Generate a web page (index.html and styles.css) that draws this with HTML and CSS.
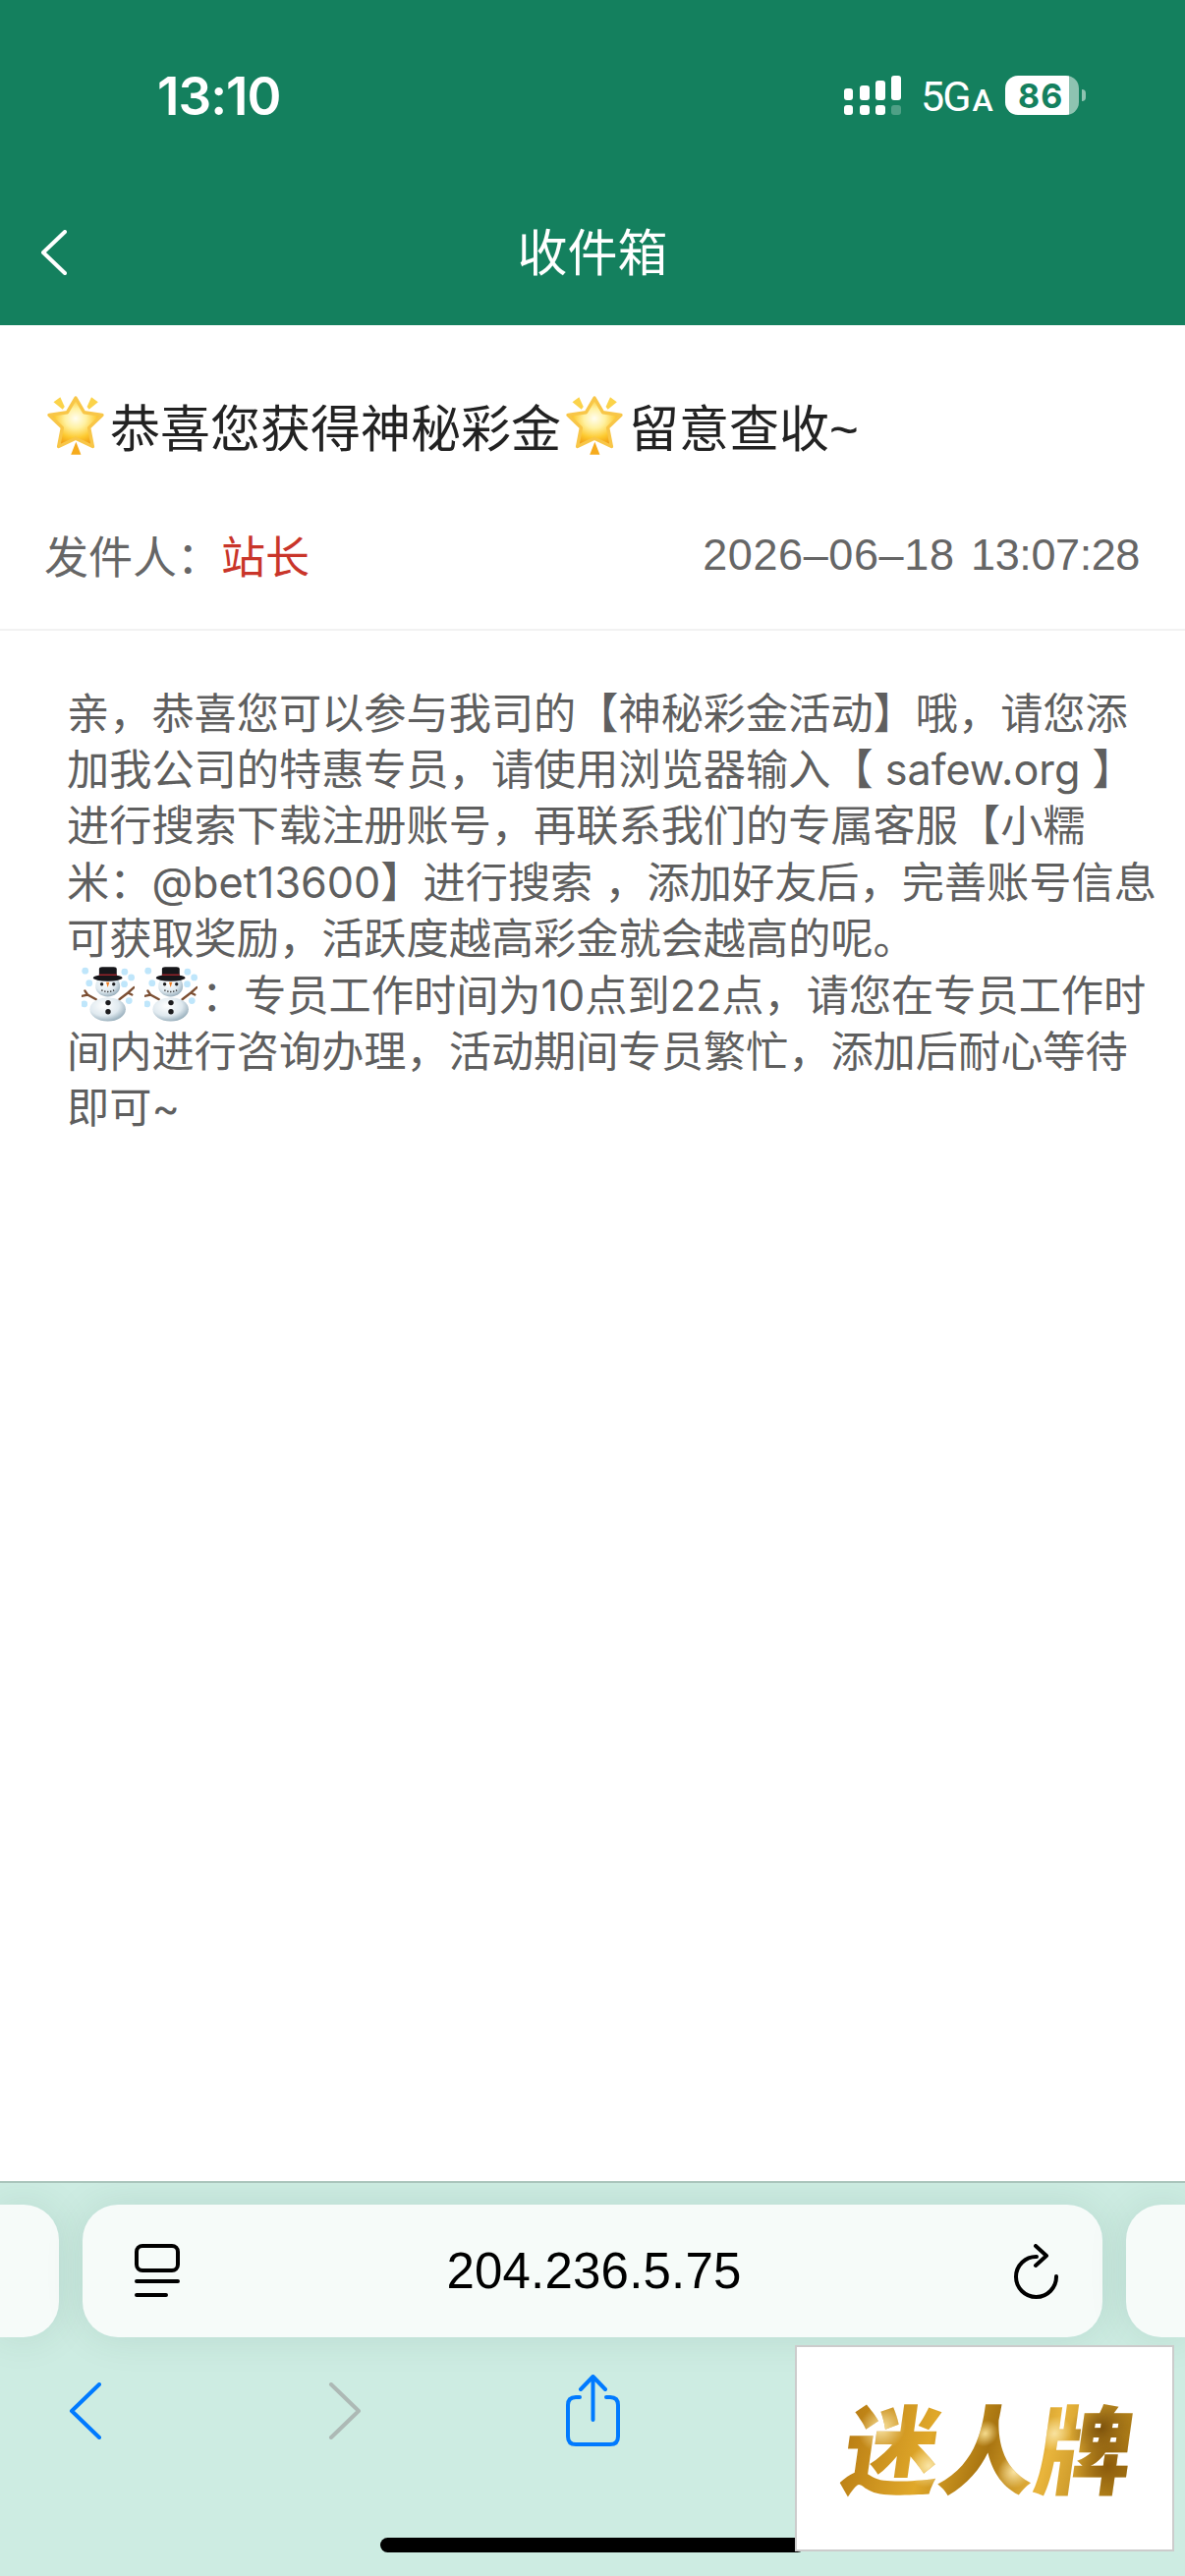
FILE: index.html
```html
<!DOCTYPE html>
<html lang="zh-CN">

<head>
  <meta charset="UTF-8">
  <meta name="viewport" content="width=device-width, initial-scale=1.0">
  <title>收件箱</title>
  <link rel="stylesheet" href="styles.css">
</head>

<body>
  <!-- shared emoji drawings -->
  <svg class="defs" width="0" height="0">
    <defs>
      <radialGradient id="starFill" cx="50%" cy="42%" r="58%">
        <stop offset="0" stop-color="#fffdf0" />
        <stop offset="0.35" stop-color="#fff1a0" />
        <stop offset="0.7" stop-color="#fdc92f" />
        <stop offset="1" stop-color="#f09a12" />
      </radialGradient>
      <radialGradient id="snowFill" cx="40%" cy="35%" r="70%">
        <stop offset="0" stop-color="#ffffff" />
        <stop offset="0.6" stop-color="#dfe9ef" />
        <stop offset="1" stop-color="#90a8b6" />
      </radialGradient>
      <symbol id="star" viewBox="55 78 170 176">
        <path d="M140 84 165 127 219 135 180 173 191 229 140 205 89 229 100 173 61 135 115 127Z" fill="url(#starFill)" stroke="#f8c648" stroke-width="10" stroke-linejoin="round" />
        <path d="M74 96 94 82 107 110 101 118Z" fill="#fbd34a" />
        <path d="M207 96 187 82 174 110 180 118Z" fill="#fbd34a" />
        <path d="M141 215 156 253 126 253Z" fill="#f6ab1d" />
      </symbol>
      <symbol id="snowman" viewBox="0 0 160 165">
        <path d="M44 98 18 84 0 88M18 84 10 72M114 98 140 78 158 62M140 78 152 84" fill="none" stroke="#7c4f33" stroke-width="7" stroke-linecap="round" />
        <g fill="#bfe6fb">
          <circle cx="11" cy="12" r="10" />
          <circle cx="23" cy="49" r="10" />
          <circle cx="8" cy="112" r="10" />
          <circle cx="130" cy="15" r="10" />
          <circle cx="150" cy="32" r="10" />
          <circle cx="129" cy="52" r="10" />
          <circle cx="143" cy="102" r="10" />
        </g>
        <ellipse cx="79" cy="128" rx="54" ry="36" fill="url(#snowFill)" />
        <ellipse cx="79" cy="58" rx="37" ry="32" fill="url(#snowFill)" />
        <ellipse cx="79" cy="33" rx="44" ry="10" fill="#16161a" />
        <path d="M53 32V7Q53 0 62 0H97Q106 0 106 7V32Z" fill="#16161a" />
        <rect x="53" y="22" width="53" height="4" fill="#a3242b" />
        <circle cx="61" cy="52" r="5" fill="#1c1c1e" />
        <circle cx="97" cy="52" r="5" fill="#1c1c1e" />
        <path d="M74 46H84L79 62Z" fill="#ef7d22" />
        <path d="M60 70Q79 80 98 70" fill="none" stroke="#333" stroke-width="4" stroke-dasharray="4 5" />
        <circle cx="80" cy="108" r="8" fill="#1c1c1e" />
        <circle cx="80" cy="135" r="8" fill="#1c1c1e" />
      </symbol>
    </defs>
  </svg>

  <div class="page">
    <header class="topbar">
      <div class="status">
        <span class="time">13:10</span>
        <div class="status-icons">
          <svg class="signal" width="58" height="40" viewBox="0 0 58 40" fill="#fff">
            <rect x="0" y="13" width="9" height="12" rx="3" />
            <rect x="16" y="10" width="10" height="15" rx="3" />
            <rect x="32" y="5" width="10" height="20" rx="3" />
            <rect x="48" y="0" width="10" height="25" rx="3" />
            <rect x="0" y="30" width="9" height="10" rx="3" />
            <rect x="16" y="30" width="10" height="10" rx="3" />
            <rect x="32" y="30" width="10" height="10" rx="3" />
            <rect x="48" y="30" width="10" height="10" rx="3" opacity="0.25" />
          </svg>
          <span class="network">5G<small>A</small></span>
          <div class="battery"><span>86</span></div>
          <i class="battery-nub"></i>
        </div>
      </div>
      <div class="navbar">
        <svg width="26" height="46" viewBox="0 0 26 46" fill="none" stroke="#fff" stroke-width="4" stroke-linecap="round" stroke-linejoin="round">
          <path d="M24 2 2 23 24 44" />
        </svg>
        <h2>收件箱</h2>
      </div>
    </header>

    <main class="message">
      <h1 class="subject"><svg class="star"><use href="#star" /></svg>恭喜您获得神秘彩金<svg class="star"><use href="#star" /></svg>留意查收~</h1>
      <div class="meta">
        <span>发件人&#xFF1A;<b class="sender">站长</b></span>
        <span class="date"><span class="date-day">2026–06–18</span> <span class="date-time">13:07:28</span></span>
      </div>
      <div class="body-text">
        亲&#xFF0C;恭喜您可以参与我司的【神秘彩金活动】哦&#xFF0C;请您添加我公司的特惠专员&#xFF0C;请使用浏览器输入【 safew.org 】进行搜索下载注册账号&#xFF0C;再联系我们的专属客服【小糯米&#xFF1A;@bet13600】进行搜索 &#xFF0C;添加好友后&#xFF0C;完善账号信息可获取奖励&#xFF0C;活跃度越高彩金就会越高的呢。<br>
        <span class="snow-run"><svg class="snowman"><use href="#snowman" /></svg><svg class="snowman"><use href="#snowman" /></svg></span>&#xFF1A;专员工作时间为10点到22点&#xFF0C;请您在专员工作时间内进行咨询办理&#xFF0C;活动期间专员繁忙&#xFF0C;添加后耐心等待即可~
      </div>
    </main>

    <footer class="toolbar">
      <div class="url-row">
        <div class="tab-edge tab-edge-left"></div>
        <div class="url-bar">
          <svg width="46" height="55" viewBox="0 0 46 55" fill="none" stroke="#000" stroke-width="4" stroke-linecap="round">
            <rect x="2" y="2" width="42" height="25" rx="6" />
            <path d="M2 38H44M2 52H32" />
          </svg>
          <span class="url">204.236.5.75</span>
          <svg width="46" height="56" viewBox="0 0 46 56" fill="none" stroke="#000" stroke-width="4" stroke-linecap="round" stroke-linejoin="round">
            <path d="M23 13A20.500 20.500 0 1 0 43 33" />
            <path d="M22 2 33 12 22 22" />
          </svg>
        </div>
        <div class="tab-edge tab-edge-right"></div>
      </div>
      <div class="nav-row">
        <svg width="34" height="58" viewBox="0 0 34 58" fill="none" stroke="#007aff" stroke-width="4" stroke-linecap="round" stroke-linejoin="round">
          <path d="M31 2 3 29 31 56" />
        </svg>
        <svg width="34" height="58" viewBox="0 0 34 58" fill="none" stroke="#adb9b5" stroke-width="4" stroke-linecap="round" stroke-linejoin="round">
          <path d="M3 2 31 29 3 56" />
        </svg>
        <svg class="share" width="59" height="74" viewBox="0 0 59 74" fill="none" stroke="#007aff" stroke-width="4" stroke-linecap="round" stroke-linejoin="round">
          <path d="M16 23H12Q4 23 4 31V63Q4 71 12 71H47Q55 71 55 63V31Q55 23 47 23H43" />
          <path d="M29.500 46V3M17 15 29.500 2 42 15" />
        </svg>
      </div>
      <div class="home-bar"></div>
      <div class="ad-box"><span class="ad-text">迷人牌</span></div>
    </footer>
  </div>
</body>

</html>
```

FILE: styles.css
```css
* {
  box-sizing: border-box;
}

body {
  margin: 0;
  background-color: #fff;
  font-family: "Liberation Sans", "Noto Sans CJK SC", sans-serif;
}

.defs {
  display: block;
  height: 0;
}

.page {
  display: flex;
  flex-direction: column;
  width: 1206px;
  height: 2622px;
  overflow: hidden;
}

/* green top area */
.topbar {
  height: 331px;
  background-color: #14805e;
  color: #fff;
}

.status {
  display: flex;
  justify-content: space-between;
  align-items: center;
  height: 194px;
  padding: 0 101px 0 160px;
}

.time {
  padding-top: 2px;
  font-family: Inter, sans-serif;
  font-size: 53px;
  font-weight: 600;
  letter-spacing: -1px;
}

.status-icons {
  display: flex;
  align-items: center;
}

.signal {
  margin-right: 20px;
}

.network {
  width: 66px;
  padding-top: 6px;
  font-family: Roboto, sans-serif;
  font-size: 43px;
  letter-spacing: -2px;
  line-height: 40px;
  white-space: nowrap;
}

.network small {
  margin-left: 3px;
  font-size: 32px;
  font-weight: 500;
}

.battery {
  display: flex;
  align-items: center;
  width: 75px;
  height: 40px;
  margin-left: 20px;
  padding-left: 13px;
  border-radius: 13px;
  background: linear-gradient(to right, #fff 65px, #8ec3b1 65px);
  color: #14805e;
  font-family: Inter, sans-serif;
  font-size: 34px;
  font-weight: 700;
  letter-spacing: 1px;
}

.battery-nub {
  width: 4px;
  height: 12px;
  margin-left: 3px;
  border-radius: 0 6px 6px 0;
  background-color: #8ec3b1;
}

.navbar {
  display: grid;
  grid-template-columns: 1fr auto 1fr;
  align-items: center;
  height: 137px;
  padding: 0 0 12px 42px;
}

.navbar h2 {
  margin: 0 0 6px -42px;
  font-size: 51px;
  font-weight: 400;
}

/* message */
.message {
  flex: 1;
  padding-top: 72px;
}

.subject {
  display: flex;
  align-items: center;
  height: 60px;
  margin: 0;
  padding-left: 48px;
  color: #222;
  font-size: 51px;
  font-weight: 400;
  white-space: nowrap;
}

.star {
  width: 58px;
  height: 60px;
  margin-right: 6px;
}

.subject .star:nth-of-type(2) {
  margin-left: 5px;
}

.meta {
  display: flex;
  justify-content: space-between;
  align-items: center;
  height: 179px;
  padding: 26px 46px 0 45px;
  border-bottom: 2px solid #f2f2f2;
  color: #666;
  font-size: 45px;
}

.sender {
  color: #c9352a;
  font-weight: 400;
}

.date-day {
  margin-right: 4px;
  letter-spacing: 0.6px;
}

.date-time {
  letter-spacing: -0.4px;
}

.body-text {
  padding: 56px 22px 0 68px;
  color: #5f5f5f;
  font-family: Inter, "Noto Sans CJK SC", sans-serif;
  font-size: 43.2px;
  line-height: 57.2px;
}

.snow-run {
  margin: 0 -6px 0 15px;
}

.snowman {
  width: 54px;
  height: 56px;
  margin-right: 10px;
  vertical-align: -11px;
}

/* browser toolbar */
.toolbar {
  position: relative;
  height: 402px;
  overflow: hidden;
  border-top: 2px solid #a9c4bb;
  background-color: #cdece2;
}

.url-row {
  display: flex;
  gap: 24px;
  padding-top: 22px;
}

.tab-edge {
  width: 60px;
  height: 135px;
  background-color: #f6fbf9;
  box-shadow: 0 0 40px rgba(0, 70, 50, 0.1);
}

.tab-edge-left {
  border-radius: 0 36px 36px 0;
}

.tab-edge-right {
  border-radius: 36px 0 0 36px;
}

.url-bar {
  display: flex;
  justify-content: space-between;
  align-items: center;
  width: 1038px;
  height: 135px;
  padding: 0 44px 0 53px;
  border-radius: 36px;
  background-color: #f6fbf9;
  box-shadow: 0 0 40px rgba(0, 70, 50, 0.1);
  color: #000;
}

.url {
  font-size: 51px;
  letter-spacing: 0.2px;
  margin-right: 6px;
}

.nav-row {
  display: grid;
  grid-template-columns: 264px 240px auto;
  align-items: center;
  justify-items: start;
  padding: 38px 0 0 70px;
}

.home-bar {
  width: 432px;
  height: 15px;
  margin: 92px 0 0 387px;
  border-radius: 8px;
  background-color: #000;
}

/* ad floating over the toolbar */
.ad-box {
  position: absolute;
  top: 165px;
  left: 809px;
  display: flex;
  justify-content: center;
  align-items: center;
  width: 386px;
  height: 210px;
  padding: 0 0 8px 10px;
  border: 2px solid #ccc;
  background-color: #fff;
}

.ad-text {
  display: block;
  background:
    radial-gradient(circle at 12% 35%, #f8e2a0 0, rgba(248, 226, 160, 0) 9%),
    radial-gradient(circle at 30% 70%, #fbe6a6 0, rgba(251, 230, 166, 0) 10%),
    radial-gradient(circle at 48% 40%, #f6dc8e 0, rgba(246, 220, 142, 0) 8%),
    radial-gradient(circle at 60% 75%, #fbe6a6 0, rgba(251, 230, 166, 0) 9%),
    radial-gradient(circle at 72% 40%, #f8e2a0 0, rgba(248, 226, 160, 0) 8%),
    radial-gradient(circle at 88% 35%, #7d520c 0, rgba(125, 82, 12, 0) 12%),
    radial-gradient(circle at 92% 70%, #8a5a0c 0, rgba(138, 90, 12, 0) 12%),
    linear-gradient(100deg, #b67a12, #e0a82a 30%, #a87410 50%, #e9b53c 70%, #a0700f);
  -webkit-background-clip: text;
  background-clip: text;
  color: transparent;
  font-family: "Noto Sans CJK SC", sans-serif;
  font-size: 98px;
  font-weight: 900;
  line-height: 110px;
  white-space: nowrap;
  transform: skewX(-8deg);
}
```
